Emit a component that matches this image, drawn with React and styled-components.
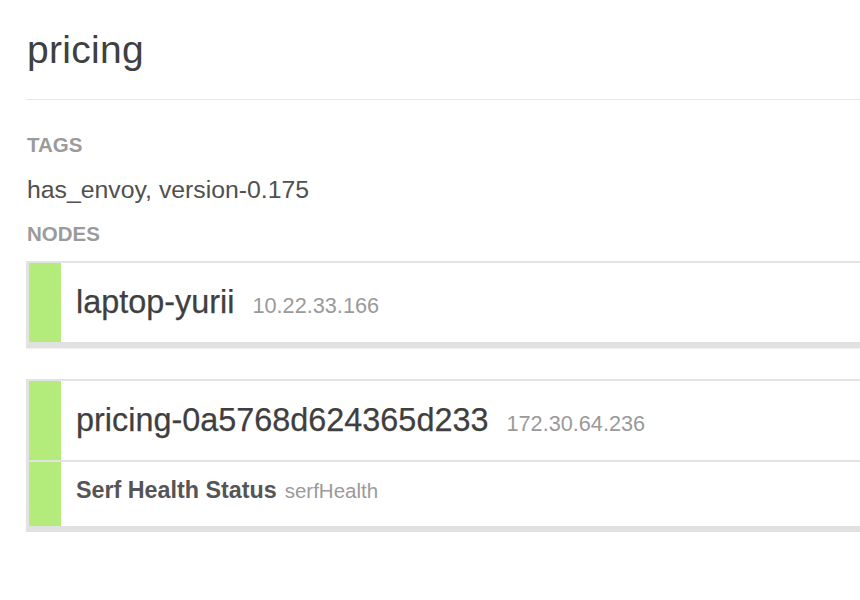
import React from "react";
import styled, { createGlobalStyle } from "styled-components";

const GlobalStyle = createGlobalStyle`
  html, body {
    margin: 0;
    padding: 0;
    background: #fff;
    overflow: hidden;
  }
  body {
    font-family: "Liberation Sans", Arial, Helvetica, sans-serif;
  }
`;

const Page = styled.div`
  padding-left: 26px;
`;

const Header = styled.div`
  padding-top: 28px;
  padding-left: 1px;
  height: 71px;
  border-bottom: 1px solid #e6e6e6;
`;

const Title = styled.h1`
  margin: 0;
  font-size: 39px;
  line-height: 44px;
  font-weight: 400;
  color: #404040;
  letter-spacing: 0.3px;
`;

const Label = styled.h4`
  margin: ${(p) => p.$top}px 0 0 1px;
  font-size: 20.5px;
  line-height: 24px;
  font-weight: 700;
  color: #9b9b9b;
`;

const Tags = styled.p`
  margin: 18px 0 0 1px;
  font-size: 24.8px;
  line-height: 30px;
  color: #505050;
`;

const NodeList = styled.div`
  margin-top: 15px;
  display: flex;
  flex-direction: column;
  gap: 31px;
`;

const Card = styled.div`
  border: 2px solid #e3e3e3;
  border-left-width: 3px;
  border-right: none;
  border-bottom: 6px solid #e1e1e1;
  box-shadow: 0 1px 1px rgba(0, 0, 0, 0.05);
  background: #fff;
`;

const Row = styled.div`
  display: flex;
  height: ${(p) => p.$height}px;
  & + & {
    border-top: 2px solid #e3e3e3;
  }
`;

const Bar = styled.div`
  width: 32px;
  flex: none;
  background: #b4ec7c;
`;

const RowBody = styled.div`
  padding: ${(p) => p.$pad}px 0 0 15px;
  display: flex;
  align-items: baseline;
  gap: ${(p) => p.$gap}px;
  white-space: nowrap;
  overflow: hidden;
`;

const NodeName = styled.span`
  font-size: 32.4px;
  line-height: 40px;
  color: #3f3f3f;
  -webkit-text-stroke: 0.25px #3f3f3f;
`;

const Address = styled.span`
  font-size: 21.7px;
  color: #9a9a9a;
`;

const CheckName = styled.span`
  font-size: 23.3px;
  line-height: 28px;
  font-weight: 700;
  color: #555;
`;

const CheckId = styled.span`
  font-size: 20.5px;
  color: #9a9a9a;
`;

const nodes = [
  { name: "laptop-yurii", address: "10.22.33.166", checks: [] },
  {
    name: "pricing-0a5768d624365d233",
    address: "172.30.64.236",
    checks: [{ name: "Serf Health Status", id: "serfHealth" }],
  },
];

export default function App() {
  return (
    <Page>
      <GlobalStyle />
      <Header>
        <Title>pricing</Title>
      </Header>
      <Label $top={33}>TAGS</Label>
      <Tags>has_envoy, version-0.175</Tags>
      <Label $top={17}>NODES</Label>
      <NodeList>
        {nodes.map((node) => (
          <Card key={node.name}>
            <Row $height={79}>
              <Bar />
              <RowBody $pad={19} $gap={18}>
                <NodeName>{node.name}</NodeName>
                <Address>{node.address}</Address>
              </RowBody>
            </Row>
            {node.checks.map((check) => (
              <Row key={check.id} $height={64}>
                <Bar />
                <RowBody $pad={14} $gap={8}>
                  <CheckName>{check.name}</CheckName>
                  <CheckId>{check.id}</CheckId>
                </RowBody>
              </Row>
            ))}
          </Card>
        ))}
      </NodeList>
    </Page>
  );
}
